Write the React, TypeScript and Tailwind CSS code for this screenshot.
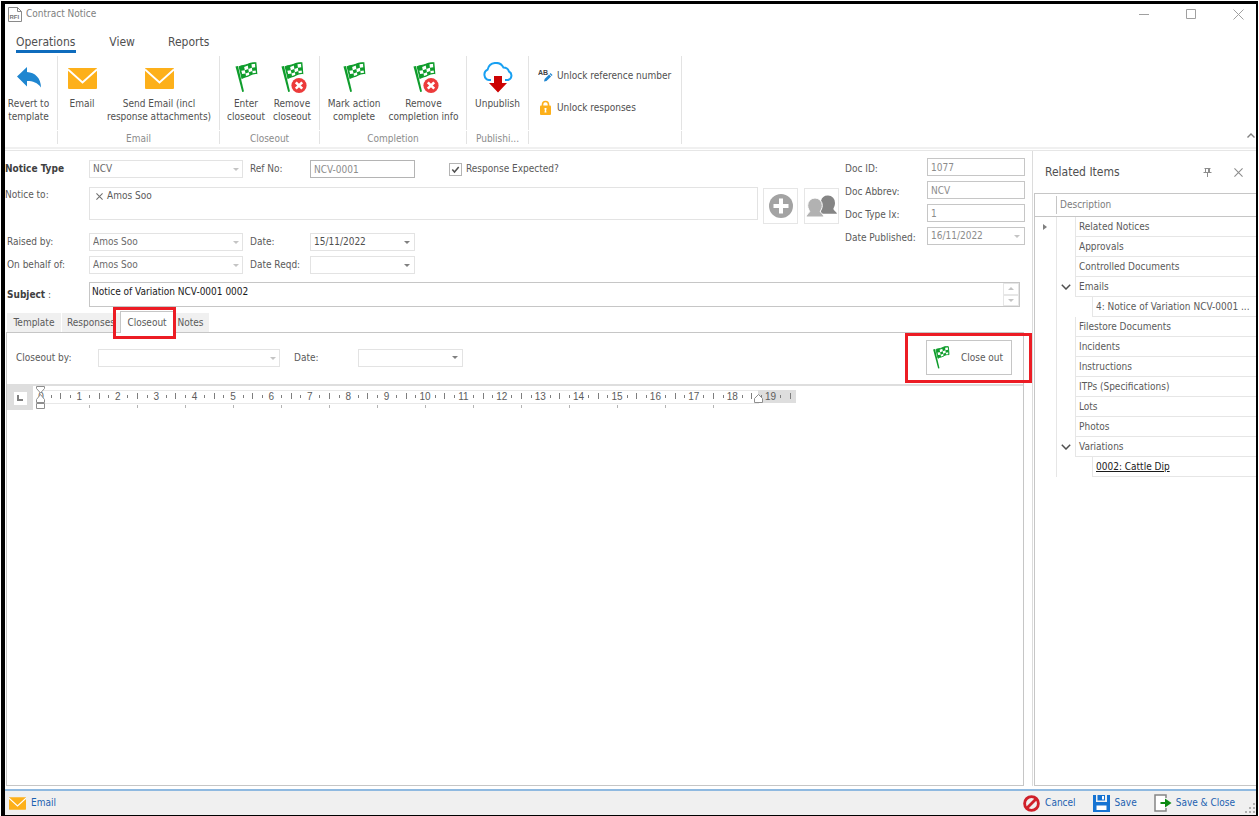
import type { ReactNode } from 'react';

const FONT = "font-['DejaVu_Sans_Condensed','DejaVu_Sans',sans-serif]";

/* ---------- icons ---------- */

function Envelope({ className }: { className: string }) {
  return (
    <svg viewBox="0 0 29 21" className={className} aria-hidden="true">
      <rect width="29" height="21" rx="1" fill="#fdb01a" />
      <path d="M0 1.500 14.500 14.500 29 1.500" fill="none" stroke="#fff" strokeWidth="2" />
    </svg>
  );
}

function RevertIcon() {
  return (
    <svg viewBox="0 0 32 32" className="size-8" aria-hidden="true">
      <path d="M4 14.500 14 5v5c8 .5 14 6 14 15.500C24.500 20.500 20 19 14 19v5.500z" fill="#1f86d0" />
    </svg>
  );
}

/* Corners of one square of the flag's check pattern (4 columns, 3 rows). */
function cell(col: number, row: number) {
  const at = (u: number, v: number) => {
    const x = 10.5 + 14.6 * u + 2.4 * v - 1.4 * u * v;
    const y = 5.4 - 3.6 * u + 10 * v + Math.sin(u * Math.PI * 2) * 0.4;
    return `${x.toFixed(2)},${y.toFixed(2)}`;
  };
  const u = col / 4;
  const v = row / 3;
  return [at(u, v), at(u + 0.25, v), at(u + 0.25, v + 1 / 3), at(u, v + 1 / 3)].join(' ');
}

const LIGHT_CELLS = [
  [1, 0], [3, 0], [0, 1], [2, 1], [1, 2], [3, 2],
];

function Flag({ removed = false, className = 'size-8' }: { removed?: boolean; className?: string }) {
  const cloth = 'M9.300 4.700c2.700-1.800 5-.6 8-2.200 2.700-1.500 5-1.900 8.500-1.600l.9 10.600c-3.700-.3-4.700.4-7.500 2-2.500 1.500-4.200.8-7.200 2.800z';
  return (
    <svg viewBox="0 0 32 32" className={className} aria-hidden="true">
      <path d="M5.500 4.500 8 3.900 14 29.500 12.200 30z" fill="#0f9d2c" />
      <path d={cloth} fill="#0f9d2c" />
      {LIGHT_CELLS.map(([c, r]) => (
        <polygon key={`${c}-${r}`} points={cell(c, r)} fill="#fff" />
      ))}
      <path d={cloth} fill="none" stroke="#0f9d2c" strokeWidth="1.200" />
      {removed && (
        <>
          <circle cx="23" cy="23.500" r="7.600" fill="#ec3b3b" />
          <path d="m19.800 20.300 6.400 6.400m0-6.400-6.400 6.400" stroke="#fff" strokeWidth="2.600" />
        </>
      )}
    </svg>
  );
}

function CloudDown() {
  return (
    <svg viewBox="0 0 32 32" className="size-8" aria-hidden="true">
      <path
        d="M9 18H7A5.500 5.500 0 0 1 5.600 7.600 8.500 8.500 0 0 1 21.500 5.600 6 6 0 0 1 27 9.500 4.600 4.600 0 0 1 26 18h-3"
        fill="none"
        stroke="#18a0f2"
        strokeWidth="2"
      />
      <path d="M12 14h8v7h5l-9 9.500L7 21h5z" fill="#cc0303" />
    </svg>
  );
}

function RenameIcon() {
  return (
    <svg viewBox="0 0 16 16" className="size-4" aria-hidden="true">
      <text x="0" y="7" fontSize="7" fontWeight="700" fill="#444" fontFamily="Liberation Sans, sans-serif">AB</text>
      <path d="m6 13.500.6-2.500 4.500-4.500 2 2L8.500 13z" fill="#1f86d0" />
      <path d="m11.700 5.900.8-.8 2 2-.8.8z" fill="#1f86d0" />
    </svg>
  );
}

function LockIcon() {
  return (
    <svg viewBox="0 0 16 16" className="size-4" aria-hidden="true">
      <path d="M4.500 8V4.500a3 3 0 0 1 6 0V8" fill="none" stroke="#fdb01a" strokeWidth="1.600" />
      <rect x="2" y="5.500" width="11" height="9.500" rx="1" fill="#fdb01a" />
      <path d="M6.500 8h2v1.500l-.4.500.4 2.500h-2l.4-2.500-.4-.5z" fill="#fff" />
    </svg>
  );
}

function Caret({ className }: { className: string }) {
  return (
    <svg viewBox="0 0 6 3" className={className} aria-hidden="true">
      <path d="M0 0h6L3 3z" fill="currentColor" />
    </svg>
  );
}

/* ---------- ribbon ---------- */

function Tool({ icon, lines, className }: { icon: ReactNode; lines: string[]; className: string }) {
  return (
    <button type="button" className={`flex flex-col items-center gap-[3px] whitespace-nowrap pt-1.5 ${className}`}>
      <span className="flex h-8 items-center">{icon}</span>
      <span className="leading-[13px]">
        {lines.map((line) => (
          <span key={line} className="block">{line}</span>
        ))}
      </span>
    </button>
  );
}

function Group({ label, className, children }: { label: string; className: string; children: ReactNode }) {
  return (
    <section className={`flex flex-col gap-px ${className}`}>
      <div className="flex h-[74px] items-start border-r border-[#e3e3e3]">{children}</div>
      <div className="h-[13px] border-r border-[#e3e3e3] text-center leading-4 text-[#8c8c8c]">{label}</div>
    </section>
  );
}

/* ---------- fields ---------- */

function SelectField({ id, value, className }: { id: string; value: string; className: string }) {
  return (
    <div className={`relative ${className}`}>
      <select
        id={id}
        disabled
        defaultValue={value}
        className="block h-[18px] w-full appearance-none border border-[#e3e3e3] bg-white px-[3px] leading-4 text-[#6a6a6a] opacity-100"
      >
        <option value={value}>{value}</option>
      </select>
      <Caret className="pointer-events-none absolute right-1 top-2 h-[3px] w-1.5 text-[#c4c4c4]" />
    </div>
  );
}

function DateField({ id, value, disabled = false }: { id: string; value: string; disabled?: boolean }) {
  return (
    <div className={`flex h-[18px] items-center border bg-white pr-1 ${disabled ? 'w-[98px] border-[#c6c6c6] text-[#8c8c8c]' : 'w-[105px] border-[#e3e3e3] text-[#505050]'}`}>
      <input id={id} type="text" defaultValue={value} disabled={disabled} className="h-4 w-0 flex-1 px-[3px] leading-4" />
      <button type="button" aria-label="Open calendar" disabled={disabled}>
        <Caret className={`h-[3px] w-1.5 ${disabled ? 'text-[#c4c4c4]' : 'text-[#808080]'}`} />
      </button>
    </div>
  );
}

const DOC_FIELDS = [
  { id: 'doc-id', label: 'Doc ID:', value: '1077' },
  { id: 'doc-abbrev', label: 'Doc Abbrev:', value: 'NCV' },
  { id: 'doc-type', label: 'Doc Type Ix:', value: '1' },
];

/* ---------- ruler ---------- */

const CM = 38.4;
const CENTIMETRES = Array.from({ length: 20 }, (_, i) => i);
const TAB_STOPS = Array.from({ length: 14 }, (_, i) => 56 + i * 48);

function Ruler() {
  return (
    <svg width="770" height="26" viewBox="0 0 770 26" className="shrink-0" aria-hidden="true">
      <path d="M8 4.500h718M8 17.500h718" stroke="#e8e8e8" />
      <rect x="725" y="4" width="38" height="13" fill="#dedede" />
      <g fill="#5c5c5c" fontSize="10" fontFamily="Liberation Sans, sans-serif" textAnchor="middle">
        {CENTIMETRES.map((n) => (
          <g key={n}>
            <text x={8 + n * CM} y="14">{n}</text>
            <g fill="#7e7e7e">
              <rect x={Math.round(8 + n * CM + 9.6)} y="9" width="1" height="3" />
              <rect x={Math.round(8 + n * CM + 19.2)} y="7" width="1" height="6" />
              {n < 19 && <rect x={Math.round(8 + n * CM + 28.8)} y="9" width="1" height="3" />}
            </g>
          </g>
        ))}
      </g>
      {TAB_STOPS.map((x) => (
        <rect key={x} x={x} y="19" width="1" height="3" fill="#b4b4b4" />
      ))}
      <g fill="#fff" stroke="#8e8e8e">
        <path d="M3.500.5h8v2l-4 4.500-4-4.500z" />
        <path d="M7.500 8.500l4 5v3h-8v-3z" />
        <path d="M3.500 17.500h8v5h-8z" />
        <path d="M725.500 8.500l4 4v4h-8v-4z" />
      </g>
    </svg>
  );
}

/* ---------- related items ---------- */

type Row = { text: string; kind: 'leaf' | 'open' | 'child' | 'link' };

const ROWS: Row[] = [
  { text: 'Related Notices', kind: 'leaf' },
  { text: 'Approvals', kind: 'leaf' },
  { text: 'Controlled Documents', kind: 'leaf' },
  { text: 'Emails', kind: 'open' },
  { text: '4: Notice of Variation NCV-0001 ...', kind: 'child' },
  { text: 'Filestore Documents', kind: 'leaf' },
  { text: 'Incidents', kind: 'leaf' },
  { text: 'Instructions', kind: 'leaf' },
  { text: 'ITPs (Specifications)', kind: 'leaf' },
  { text: 'Lots', kind: 'leaf' },
  { text: 'Photos', kind: 'leaf' },
  { text: 'Variations', kind: 'open' },
  { text: '0002: Cattle Dip', kind: 'link' },
];

function RelatedItems() {
  return (
    <aside className="flex w-[224px] shrink-0 flex-col border-l border-[#dcdcdc] pl-px">
      <div className="flex h-[42px] items-center pl-[11px] pr-[13px]">
        <h2 className="flex-1 text-[12px] text-[#505050]">Related Items</h2>
        <button type="button" aria-label="Pin" className="mr-[22px]">
          <svg viewBox="0 0 9 9" className="size-[9px]" fill="none" stroke="#8c8c8c" aria-hidden="true">
            <path d="M1.500.5h6M2.500.5v4M6.500.5v4M5.500.5v4M.5 4.500h8M4.500 5v4" />
          </svg>
        </button>
        <button type="button" aria-label="Close panel">
          <svg viewBox="0 0 10 10" className="size-[9px]" stroke="#8c8c8c" strokeWidth="1.200" aria-hidden="true">
            <path d="m.5.5 9 9m0-9-9 9" />
          </svg>
        </button>
      </div>
      <div className="flex-1 border-b border-l border-t border-[#c6c6c6]">
        <table className="w-full table-fixed border-separate border-spacing-0 text-left">
          <thead>
            <tr>
              <th className="w-[22px] border-b border-[#c6c6c6] p-0">
                <span className="block h-[18px] border-r border-[#c6c6c6]" />
              </th>
              <th className="h-[23px] border-b border-[#c6c6c6] p-0 pl-[3px] font-normal text-[#7c7c7c]">Description</th>
            </tr>
          </thead>
          <tbody>
            {ROWS.map((row, i) => {
              const nested = row.kind === 'child' || row.kind === 'link';
              return (
                <tr key={row.text}>
                  <td className="border-r border-[#e6e6e6] p-0">
                    {i === 0 && (
                      <svg viewBox="0 0 4 6" className="ml-2 h-1.5 w-1" aria-hidden="true">
                        <path d="M0 0v6l4-3z" fill="#808080" />
                      </svg>
                    )}
                  </td>
                  <td className="h-5 p-0">
                    <div className="flex h-5">
                      <span className={`flex shrink-0 items-center justify-center ${nested ? 'w-[35px]' : 'w-[18px]'}`}>
                        {row.kind === 'open' && (
                          <button type="button" aria-label={`Collapse ${row.text}`}>
                            <svg viewBox="0 0 10 6" className="h-1.5 w-2.5" fill="none" stroke="#505050" strokeWidth="1.500" aria-hidden="true">
                              <path d="m.8.8 4.200 4.200L9.200.8" />
                            </svg>
                          </button>
                        )}
                      </span>
                      <span className="min-w-0 flex-1 whitespace-nowrap border-b border-l border-[#e6e6e6] pl-[3px] leading-5 text-[#5a5a5a]">
                        {row.kind === 'link' ? (
                          <a href="#cattle-dip" className="text-[#1a1a1a] underline">{row.text}</a>
                        ) : (
                          row.text
                        )}
                      </span>
                    </div>
                  </td>
                </tr>
              );
            })}
          </tbody>
        </table>
      </div>
    </aside>
  );
}

/* ---------- page ---------- */

export default function App() {
  return (
    <div className={`flex min-h-screen flex-col bg-white pl-px pr-px pt-px text-[10px] leading-4 text-[#5a5a5a] ${FONT}`}>
      <div className="flex flex-1 flex-col border-b border-l-4 border-r-2 border-t-[3px] border-black">
        <header className="flex h-5 items-center pl-[3px] pr-3">
          <svg viewBox="0 0 14 15" className="mr-1 h-[15px] w-3.5" aria-hidden="true">
            <path d="M.5.5h9l4 4v10H.5zM9.500.5v4h4" fill="#fff" stroke="#8a8a8a" />
            <text x="1.500" y="12" fontSize="6" fontWeight="700" fill="#777" fontFamily="Liberation Sans, sans-serif">RFI</text>
          </svg>
          <h1 className="flex-1 text-[#808080]">Contract Notice</h1>
          <div className="flex items-center gap-9">
            <button type="button" aria-label="Minimize">
              <svg viewBox="0 0 11 11" className="size-[11px]" aria-hidden="true"><path d="M0 5.500h10" stroke="#a0a0a0" /></svg>
            </button>
            <button type="button" aria-label="Maximize">
              <svg viewBox="0 0 11 11" className="size-[11px]" aria-hidden="true"><path d="M.5.5h9v9h-9z" fill="none" stroke="#a0a0a0" /></svg>
            </button>
            <button type="button" aria-label="Close">
              <svg viewBox="0 0 11 11" className="size-[11px]" aria-hidden="true"><path d="m.5.5 10 10m0-10-10 10" stroke="#a0a0a0" /></svg>
            </button>
          </div>
        </header>

        <nav className="flex h-8 items-start gap-[33px] pl-[11px] pt-2.5 text-[12px] text-[#505050]">
          <a href="#operations" className="border-b-[3px] border-[#0f6cbd] pr-px">Operations</a>
          <a href="#view">View</a>
          <a href="#reports">Reports</a>
        </nav>

        <div className="flex border-b-2 border-[#f0f0f0] pb-[3px] text-[#505050]">
          <Group label="" className="w-[53px]">
            <Tool className="w-[47px]" icon={<RevertIcon />} lines={['Revert to', 'template']} />
          </Group>
          <Group label="Email" className="w-[162px]">
            <Tool className="w-12" icon={<Envelope className="h-[21px] w-[29px]" />} lines={['Email']} />
            <Tool className="w-[106px]" icon={<Envelope className="h-[21px] w-[29px]" />} lines={['Send Email (incl', 'response attachments)']} />
          </Group>
          <Group label="Closeout" className="w-[100px]">
            <Tool className="ml-[3px] w-[46px]" icon={<Flag />} lines={['Enter', 'closeout']} />
            <Tool className="w-[46px]" icon={<Flag removed />} lines={['Remove', 'closeout']} />
          </Group>
          <Group label="Completion" className="w-[147px]">
            <Tool className="w-[68px]" icon={<Flag />} lines={['Mark action', 'complete']} />
            <Tool className="w-[71px]" icon={<Flag removed />} lines={['Remove', 'completion info']} />
          </Group>
          <Group label="Publishi..." className="w-[62px]">
            <Tool className="w-full" icon={<CloudDown />} lines={['Unpublish']} />
          </Group>
          <Group label="" className="w-[153px]">
            <div className="flex flex-col gap-4 whitespace-nowrap pl-[9px] pt-3">
              <button type="button" className="flex items-center gap-[3px]"><RenameIcon />Unlock reference number</button>
              <button type="button" className="flex items-center gap-[3px]"><LockIcon />Unlock responses</button>
            </div>
          </Group>
          <button type="button" aria-label="Collapse ribbon" className="mb-1.5 ml-auto self-end pr-px">
            <svg viewBox="0 0 8 5" className="h-[5px] w-2" fill="none" stroke="#808080" strokeWidth="1.400" aria-hidden="true">
              <path d="M.5 4.500 4 1l3.500 3.500" />
            </svg>
          </button>
        </div>

        <div className="mt-px flex flex-1 border-t border-[#e6e6e6]">
          <main className="flex min-w-0 flex-1 flex-col pr-2">
            <div className="-mr-px flex gap-1.5 pt-[7px]">
              <div className="min-w-0 flex-1 pt-0.5">
                <div className="flex items-center">
                  <label htmlFor="notice-type" className="w-[84px] font-bold text-[#404040]">Notice Type</label>
                  <SelectField id="notice-type" value="NCV" className="w-[154px]" />
                  <label htmlFor="ref-no" className="ml-[7px] w-[60px]">Ref No:</label>
                  <input id="ref-no" type="text" disabled defaultValue="NCV-0001" className="h-[18px] w-[105px] border border-[#b4b4b4] px-[3px] leading-4 text-[#8c8c8c]" />
                  <label className="ml-[34px] flex items-center gap-1">
                    <span className="relative block size-[13px]">
                      <input type="checkbox" defaultChecked className="block size-[13px] appearance-none border border-[#b4b4b4] bg-white" />
                      <svg viewBox="0 0 13 13" className="pointer-events-none absolute inset-0 size-[13px]" fill="none" stroke="#505050" strokeWidth="1.500" aria-hidden="true">
                        <path d="m3.300 6.500 2.200 2.500 4.200-5" />
                      </svg>
                    </span>
                    Response Expected?
                  </label>
                </div>

                <div className="mt-[9px] flex h-[37px] items-start">
                  <span className="w-[84px]">Notice to:</span>
                  <div className="flex h-[33px] flex-1 items-start border border-[#e3e3e3] pl-1.5">
                    <button type="button" aria-label="Remove Amos Soo" className="mr-1 mt-[5px]">
                      <svg viewBox="0 0 8 8" className="size-[7px]" stroke="#707070" strokeWidth="1.200" aria-hidden="true"><path d="m.5.5 7 7m0-7-7 7" /></svg>
                    </button>
                    Amos Soo
                  </div>
                  <button type="button" aria-label="Add recipient" className="ml-[5px] mt-px flex h-9 w-[35px] items-center justify-center border border-[#e6e6e6]">
                    <svg viewBox="0 0 24 24" className="size-6" aria-hidden="true">
                      <circle cx="12" cy="12" r="12" fill="#a3a3a3" />
                      <path d="M12 4.500v15M4.500 12h15" stroke="#fff" strokeWidth="4" />
                    </svg>
                  </button>
                  <button type="button" aria-label="Select people" className="ml-1.5 mt-px flex h-9 w-[35px] items-center justify-center border border-[#e6e6e6]">
                    <svg viewBox="0 0 31 23" className="h-[23px] w-[31px]" aria-hidden="true">
                      <path d="M22 .5a7 7 0 0 1 7 7.500c0 3-1.200 4.500-1.700 6 .4 1.600 3 2.500 3.700 4.800H15V6A7 7 0 0 1 22 .5z" fill="#858585" />
                      <path d="M9 3a7.300 7.300 0 0 1 7.300 7.500c0 3-1.500 4.500-2 6 .6 1.600 3 2.500 3.700 5.500H0c.7-3 3.100-3.900 3.700-5.500-.5-1.500-2-3-2-6A7.300 7.300 0 0 1 9 3z" fill="#b2b2b2" stroke="#fff" strokeWidth="1" />
                    </svg>
                  </button>
                </div>

                <div className="mt-[9px] flex items-center">
                  <label htmlFor="raised-by" className="w-[84px] pl-0.5">Raised by:</label>
                  <SelectField id="raised-by" value="Amos Soo" className="w-[154px]" />
                  <label htmlFor="date" className="ml-[7px] w-[60px]">Date:</label>
                  <DateField id="date" value="15/11/2022" />
                </div>
                <div className="mt-[5px] flex items-center">
                  <label htmlFor="on-behalf" className="w-[84px] pl-0.5">On behalf of:</label>
                  <SelectField id="on-behalf" value="Amos Soo" className="w-[154px]" />
                  <label htmlFor="date-reqd" className="ml-[7px] w-[60px]">Date Reqd:</label>
                  <DateField id="date-reqd" value="" />
                </div>
              </div>

              <div className="flex flex-col gap-[5px]">
                {DOC_FIELDS.map((f) => (
                  <div key={f.id} className="flex h-[18px] items-center">
                    <label htmlFor={f.id} className="w-[82px] pt-[3px]">{f.label}</label>
                    <input id={f.id} type="text" disabled defaultValue={f.value} className="h-[18px] w-[98px] border border-[#c6c6c6] px-[3px] leading-4 text-[#8c8c8c]" />
                  </div>
                ))}
                <div className="flex h-[18px] items-center">
                  <label htmlFor="date-published" className="w-[82px] whitespace-nowrap pt-[3px]">Date Published:</label>
                  <DateField id="date-published" value="16/11/2022" disabled />
                </div>
              </div>
            </div>

            <div className="mt-2 flex items-center pr-1">
              <label htmlFor="subject" className="w-[84px] pl-0.5">
                <b className="text-[#404040]">Subject</b> :
              </label>
              <div className="flex h-[25px] flex-1 border border-[#c6c6c6] text-[#1a1a1a]">
                <textarea id="subject" rows={1} defaultValue="Notice of Variation NCV-0001 0002" className="block h-[23px] flex-1 resize-none overflow-hidden px-0.5 pt-px leading-4" />
                <div className="flex w-4 flex-col text-[#c4c4c4]">
                  <button type="button" aria-label="Scroll up" className="flex flex-1 items-center justify-center border border-[#e6e6e6]">
                    <Caret className="h-[3px] w-1.5 rotate-180" />
                  </button>
                  <button type="button" aria-label="Scroll down" className="flex flex-1 items-center justify-center border border-[#e6e6e6]">
                    <Caret className="h-[3px] w-1.5" />
                  </button>
                </div>
              </div>
            </div>

            <div role="tablist" className="mt-1 flex items-end pl-0.5">
              <button type="button" role="tab" aria-selected="false" className="mr-px h-[19px] w-[54px] bg-[#f0f0f0]">Template</button>
              <button type="button" role="tab" aria-selected="false" className="h-[19px] w-[58px] bg-[#f0f0f0] pl-[5px] text-left">Responses</button>
              <button type="button" role="tab" aria-selected="true" className="relative -mb-px h-[22px] w-[54px] border-l border-r border-t border-[#c6c6c6] bg-white">
                Closeout
                <span className="pointer-events-none absolute -bottom-1.5 -left-2 -right-[3px] -top-[5px] border-[3px] border-[#ec1c24]" />
              </button>
              <button type="button" role="tab" aria-selected="false" className="h-[19px] w-[35px] bg-[#f0f0f0] pr-0.5 text-center">Notes</button>
            </div>

            <div className="ml-px flex flex-1 flex-col border border-[#c6c6c6]">
              <div className="flex h-[53px] items-center border-b-2 border-[#dedede] pb-0.5 pl-[9px] pr-[11px]">
                <label htmlFor="closeout-by" className="w-[82px]">Closeout by:</label>
                <SelectField id="closeout-by" value="" className="w-[182px]" />
                <label htmlFor="closeout-date" className="ml-3.5 w-16">Date:</label>
                <DateField id="closeout-date" value="" />
                <div className="relative ml-auto">
                  <button type="button" className="flex h-[35px] w-[86px] items-center gap-2 whitespace-nowrap border border-[#c6c6c6] pl-0.5">
                    <Flag className="size-6" />
                    Close out
                  </button>
                  <span className="pointer-events-none absolute -bottom-2 -left-[21px] -right-5 -top-[7px] border-[3px] border-[#ec1c24]" />
                </div>
              </div>
              <div className="flex overflow-hidden">
                <div className="flex h-6 w-[26px] shrink-0 items-center justify-center bg-[#dedede]">
                  <button type="button" aria-label="Left tab" className="flex size-[13px] items-center justify-center bg-white">
                    <svg viewBox="0 0 6 6" className="size-1.5" aria-hidden="true"><path d="M1 0v5h5" fill="none" stroke="#808080" strokeWidth="2" /></svg>
                  </button>
                </div>
                <Ruler />
              </div>
              <textarea aria-label="Closeout notes" className="block w-full flex-1 resize-none p-2 outline-none" />
            </div>
          </main>

          <RelatedItems />
        </div>

        <footer className="mt-[3px] flex h-[26px] items-center border-t-2 border-[#8fb9e0] bg-[#f0f0f0] pl-1 text-[#1c62b0]">
          <button type="button" className="flex items-center gap-[5px]">
            <Envelope className="h-[13px] w-[17px]" />
            Email
          </button>
          <div className="ml-auto flex items-center pr-px">
            <button type="button" className="mr-[17px] flex items-center gap-[5px]">
              <svg viewBox="0 0 18 18" className="size-[17px]" fill="none" stroke="#d0202a" strokeWidth="3" aria-hidden="true">
                <circle cx="9" cy="9" r="7.300" /><path d="m4 14 10-10" />
              </svg>
              Cancel
            </button>
            <button type="button" className="mr-[17px] flex items-center gap-[5px]">
              <svg viewBox="0 0 17 17" className="size-[17px]" aria-hidden="true">
                <path d="M0 0h3v7h11V0h3v17H0z" fill="#1673d2" />
                <path d="M4.500 0H12v5.500H4.500z" fill="#1673d2" />
                <path d="M9 1h2v3.500H9z" fill="#fff" />
                <path d="M3.500 10.500h10V15h-10z" fill="#fff" />
              </svg>
              Save
            </button>
            <button type="button" className="mr-2.5 flex items-center gap-1">
              <svg viewBox="0 0 18 18" className="size-[18px]" aria-hidden="true">
                <path d="M12 4V1H1v16h11v-3" fill="#fff" stroke="#858585" strokeWidth="1.500" />
                <path d="M6.500 8H11V4.500L17.500 9 11 13.500V10H6.500z" fill="#0c8a12" />
              </svg>
              Save &amp; Close
            </button>
            <svg viewBox="0 0 10 10" className="mt-2.5 size-2.5" fill="#b0b0b0" aria-hidden="true">
              <path d="M8 0h2v2H8zM4 4h2v2H4zM8 4h2v2H8zM0 8h2v2H0zM4 8h2v2H4zM8 8h2v2H8z" />
            </svg>
          </div>
        </footer>
      </div>
    </div>
  );
}
